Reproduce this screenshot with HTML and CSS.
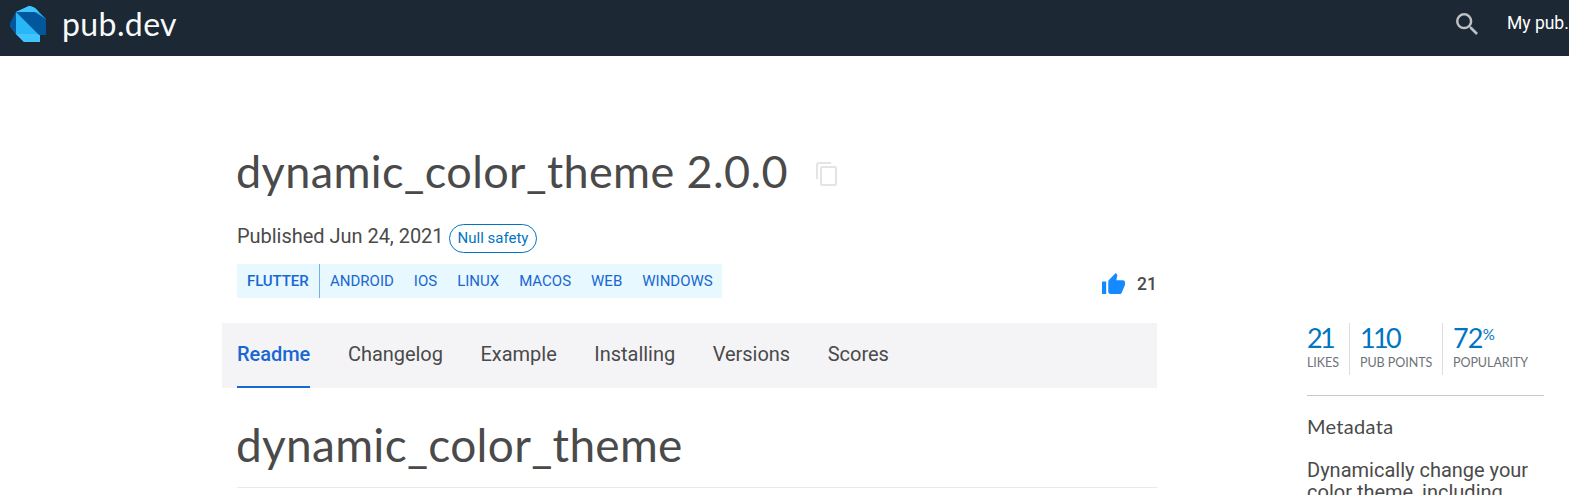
FILE: index.html
```html
<!DOCTYPE html>
<html lang="en">
<head>
<meta charset="utf-8">
<title>dynamic_color_theme | Flutter Package</title>
<link rel="stylesheet" href="styles.css">
</head>
<body>
<header class="site-header">
  <a class="brand">
    <svg class="brand-logo" width="36" height="36" viewBox="0 0 36 36">
      <path d="M6 6L19 0L25 2L36 13V29H30V36H14L6 28L0 20Z" fill="#29b6f6"/>
      <path d="M6 6V28L0 20V17Z" fill="#01579b"/>
      <path d="M6 6H25L36 13V29H29Z" fill="#01579b"/>
      <path d="M6 6L19 0Q22 0 25 2L29 6Z" fill="#40c4ff"/>
      <path d="M6 28H28L30 30V36H14Z" fill="#40c4ff"/>
    </svg>
    <span class="brand-name">pub.dev</span>
  </a>
  <nav class="site-nav">
    <svg class="search-icon" width="22" height="22" viewBox="3 3 17.5 17.5"><path fill="#bfc2c5" d="M15.5 14h-.79l-.28-.27A6.471 6.471 0 0 0 16 9.5 6.5 6.5 0 1 0 9.5 16c1.61 0 3.09-.59 4.23-1.57l.27.28v.79l5 4.99L20.49 19l-4.99-5zm-6 0C7.01 14 5 11.99 5 9.5S7.01 5 9.5 5 14 7.01 14 9.5 11.99 14 9.5 14z"/></svg>
    <span class="my-pub">My pub.</span>
  </nav>
</header>
<div class="page">
  <main class="package">
    <div class="package-head">
      <h1 class="title"><span class="title-text">dynamic_color_theme 2.0.0</span>
        <svg class="copy-icon" width="21" height="24" viewBox="0 0 21 24" fill="none" stroke="#e4e4e4" stroke-width="2"><path d="M1 17V3Q1 1 3 1H15"/><rect x="5" y="5" width="15" height="18" rx="1.5"/></svg>
      </h1>
      <div class="published"><span class="published-text">Published Jun 24, 2021</span><span class="badge">Null safety</span></div>
      <div class="tag-row">
        <div class="tags"><span class="tag-main">FLUTTER</span><div class="tag-list"><span>ANDROID</span><span>IOS</span><span>LINUX</span><span>MACOS</span><span>WEB</span><span>WINDOWS</span></div></div>
        <div class="like">
          <svg width="23" height="21" viewBox="1 1 22 20"><path fill="#1589ff" d="M1 21h4V9H1v12zm22-11c0-1.1-.9-2-2-2h-6.31l.95-4.57.03-.32c0-.41-.17-.79-.44-1.06L14.17 1 7.59 7.59C7.22 7.95 7 8.45 7 9v10c0 1.1.9 2 2 2h9c.83 0 1.54-.5 1.84-1.22l3.02-7.05c.09-.23.14-.47.14-.73v-2z"/></svg>
          <span class="like-count">21</span>
        </div>
      </div>
    </div>
    <nav class="tabs"><span class="tab active">Readme</span><span class="tab">Changelog</span><span class="tab">Example</span><span class="tab">Installing</span><span class="tab">Versions</span><span class="tab">Scores</span></nav>
    <article class="readme"><h2 class="readme-title">dynamic_color_theme</h2></article>
  </main>
  <aside class="sidebar">
    <div class="scores">
      <div class="score"><div class="value">21</div><div class="label">LIKES</div></div>
      <div class="score points"><div class="value">110</div><div class="label">PUB POINTS</div></div>
      <div class="score popularity"><div class="value wide">72<span class="percent">%</span></div><div class="label">POPULARITY</div></div>
    </div>
    <h3 class="meta-title">Metadata</h3>
    <p class="description">Dynamically change your<br>color theme, including</p>
  </aside>
</div>
</body>
</html>
```
FILE: styles.css
```css
* { box-sizing: border-box; }
body { margin: 0; height: 495px; overflow: hidden; background: #fff; color: #4a4a4a; font-family: Roboto, sans-serif; font-size: 20px; }
h1, h2, h3, p { margin: 0; font-weight: 400; }
.site-header { height: 56px; background: #1c2834; display: flex; justify-content: space-between; overflow: hidden; }
.brand { display: flex; gap: 16px; padding: 6px 0 0 10px; }
.brand-name { font: 400 32px/36px Lato, sans-serif; letter-spacing: 0.4px; color: #f8f9fa; }
.site-nav { display: flex; width: 113px; white-space: nowrap; }
.search-icon { flex: none; margin-top: 13px; }
.my-pub { margin: 12px 0 0 29px; font-size: 17.5px; line-height: 22px; color: #fff; }
.page { display: flex; padding-left: 222px; }
.package { width: 935px; flex: none; }
.package-head { padding: 86px 0 0 15px; height: 267px; }
.title { height: 60px; display: flex; align-items: center; gap: 28px; font: 400 45px/60px Lato, sans-serif; letter-spacing: 0.38px; }
.title-text { white-space: nowrap; margin: -2px 0 0 -1px; }
.copy-icon { flex: none; margin-top: 4px; }
.published { display: flex; margin-top: 22px; height: 29px; }
.published-text { line-height: 25px; width: 212px; white-space: nowrap; letter-spacing: -0.03px; }
.badge { height: 29px; width: 88px; text-align: center; border: 1px solid #0175c2; border-radius: 15px; color: #0175c2; font-size: 15px; line-height: 27px; white-space: nowrap; }
.tag-row { display: flex; justify-content: space-between; margin-top: 11px; height: 34px; }
.tags { display: flex; background: #e7f8ff; color: #1967d2; font-size: 15px; line-height: 34px; }
.tag-main { font-weight: 500; width: 83px; padding-left: 10px; border-right: 1px solid #7aabe6; letter-spacing: -0.1px; }
.tag-list { display: flex; gap: 20px; padding: 0 9px 0 10px; }
.like { display: flex; gap: 12px; margin-top: 9px; }
.like-count { font-size: 17.5px; line-height: 22px; font-weight: 500; }
.tabs { height: 65px; display: flex; gap: 37.6px; padding: 0 15px; background: #f4f4f7; line-height: 62px; letter-spacing: -0.03px; }
.active { color: #1967d2; font-weight: 500; border-bottom: 2px solid #1967d2; }
.readme { padding-left: 15px; }
.readme-title { height: 100px; padding-top: 27px; font: 400 46px/60px Lato, sans-serif; letter-spacing: 0.3px; text-indent: -1px; border-bottom: 1px solid #eaeaea; }
.sidebar { width: 237px; margin: 267px 0 0 150px; flex: none; }
.scores { display: flex; height: 73px; border-bottom: 1px solid #c8c8ca; font-family: Lato, sans-serif; }
.score { height: 52px; white-space: nowrap; }
.score:first-child { width: 42px; }
.points { width: 93px; padding-left: 10px; border-left: 1px solid #ddd; }
.popularity { padding-left: 10px; border-left: 1px solid #ddd; }
.value { color: #0175c2; font-size: 27px; line-height: 30px; display: flex; letter-spacing: -2.7px; }
.wide { letter-spacing: -0.8px; }
.percent { font-size: 15px; line-height: 23px; }
.label { color: #6d7278; font-size: 12.5px; line-height: 20px; letter-spacing: -0.05px; }
.meta-title { font: 400 20px/24px Lato, sans-serif; letter-spacing: 0.3px; margin-top: 18px; }
.description { margin-top: 21px; line-height: 22px; white-space: nowrap; }
```
